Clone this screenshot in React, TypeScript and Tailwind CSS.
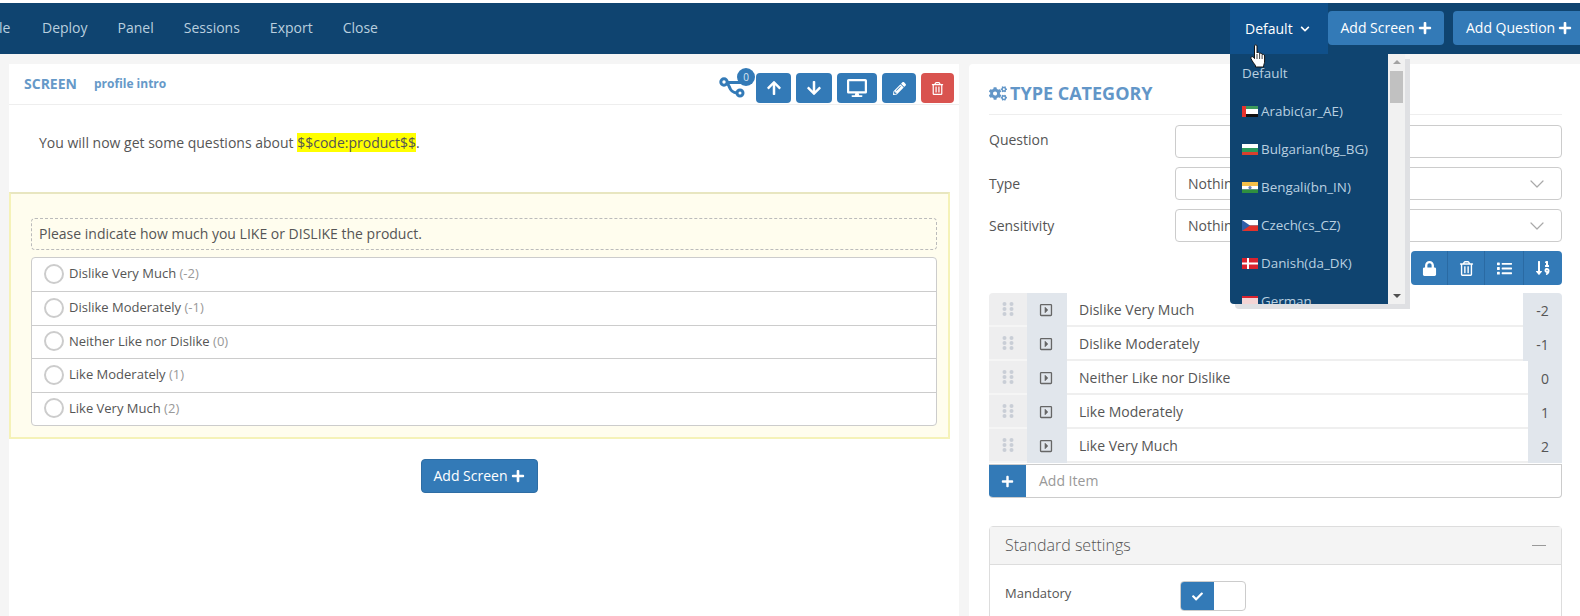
import {
  FaArrowDown,
  FaArrowUp,
  FaCheck,
  FaChevronDown,
  FaCogs,
  FaDesktop,
  FaList,
  FaLock,
  FaPencilAlt,
  FaPlus,
  FaRegCaretSquareRight,
  FaRegTrashAlt,
  FaSortNumericDown,
} from 'react-icons/fa';
import { ChevronDown } from 'lucide-react';

const NAV = ['Deploy', 'Panel', 'Sessions', 'Export', 'Close'];
const ITEMS = [
  { label: 'Dislike Very Much', score: '-2', wide: true },
  { label: 'Dislike Moderately', score: '-1', wide: true },
  { label: 'Neither Like nor Dislike', score: '0', wide: false },
  { label: 'Like Moderately', score: '1', wide: false },
  { label: 'Like Very Much', score: '2', wide: false },
];

function Flag({ code }: { code: string }) {
  return (
    <svg width="16" height="11" viewBox="0 0 16 11" className="mr-[3px] shrink-0">
      {code === 'ae' && (
        <>
          <rect width="16" height="3" fill="#3d9a5c" />
          <rect y="3" width="16" height="5" fill="#fff" />
          <rect y="8" width="16" height="3" fill="#111" />
          <rect width="4" height="11" fill="#e8332d" />
        </>
      )}
      {code === 'bg' && (
        <>
          <rect width="16" height="4" fill="#fff" />
          <rect y="4" width="16" height="4" fill="#2b9a5a" />
          <rect y="8" width="16" height="3" fill="#d9402e" />
        </>
      )}
      {code === 'in' && (
        <>
          <rect width="16" height="4" fill="#f3c04a" />
          <rect y="4" width="16" height="3.5" fill="#fff" />
          <rect y="7.5" width="16" height="3.5" fill="#2f8f3e" />
          <circle cx="8" cy="5.6" r="1.6" fill="#6a7fb5" />
        </>
      )}
      {code === 'cz' && (
        <>
          <rect width="16" height="5.5" fill="#fff" />
          <rect y="5.5" width="16" height="5.5" fill="#e2332b" />
          <polygon points="0,0 8,5.5 0,11" fill="#2f5fa8" />
        </>
      )}
      {code === 'dk' && (
        <>
          <rect width="16" height="11" fill="#d9232e" />
          <rect x="5" width="2" height="11" fill="#fff" />
          <rect y="4.5" width="16" height="2" fill="#fff" />
        </>
      )}
      {code === 'de' && (
        <>
          <rect width="16" height="2" fill="#d9232e" />
          <rect y="2" width="16" height="9" fill="#f4d5d5" />
        </>
      )}
    </svg>
  );
}

function LangMenu() {
  const langs = [
    { code: 'ae', label: 'Arabic(ar_AE)' },
    { code: 'bg', label: 'Bulgarian(bg_BG)' },
    { code: 'in', label: 'Bengali(bn_IN)' },
    { code: 'cz', label: 'Czech(cs_CZ)' },
    { code: 'dk', label: 'Danish(da_DK)' },
    { code: 'de', label: 'German' },
  ];
  return (
    <div className="absolute left-0 top-[51px] z-20 flex h-[250px] w-[175px] rounded-bl shadow-[5px_5px_0_#dfe0e3]">
      <div className="h-full w-[158px] overflow-hidden rounded-bl bg-[#0f4470] pl-3 text-[13.4px] text-[#b9d0e0]">
        <div className="flex h-[38px] items-center">Default</div>
        {langs.map((l) => (
          <div key={l.code} className="flex h-[38px] items-center pt-[1px]">
            <Flag code={l.code} />
            {l.label}
          </div>
        ))}
      </div>
      <div className="relative h-full w-[17px] bg-[#f1f1f1]">
        <div className="absolute left-[2px] top-[17px] h-[32px] w-[13px] bg-[#c1c1c1]" />
        <div className="absolute left-[5px] top-[6px] h-0 w-0 border-x-[4px] border-b-[4px] border-x-transparent border-b-[#a3a3a3]" />
        <div className="absolute bottom-[6px] left-[5px] h-0 w-0 border-x-[4px] border-t-[4px] border-x-transparent border-t-[#505050]" />
      </div>
    </div>
  );
}

function HandCursor() {
  return (
    <svg width="17" height="24" viewBox="0 0 17 24" className="absolute left-[20px] top-[41px] z-30">
      <path
        d="M4.5 2 C4.5 0.4 7 0.4 7 2 V9 C7.5 8 9.5 8 9.6 9.6 C10.2 8.8 12 9 12.1 10.6 C12.8 10 14.6 10.3 14.6 12 V17 C14.6 19 14 20 13.6 21.5 V23 H5.5 V21.5 C4 19.5 2 17 1 14.5 C0.6 13 2.2 12 3.4 13.2 L4.5 14.6 Z"
        fill="#fff"
        stroke="#111"
        strokeWidth="1"
        strokeLinejoin="round"
      />
      <path d="M7 10 V15 M9.6 10 V15 M12.1 11 V15" stroke="#111" strokeWidth="0.8" />
    </svg>
  );
}

function TopBar() {
  return (
    <header className="mt-[3px] flex h-[51px] items-stretch justify-between overflow-hidden bg-[#0f4470]">
      <nav className="flex items-center gap-[30px] pb-[1px] text-sm text-[#b9cfdf]">
        <span className="-ml-[1px] w-[13px] overflow-hidden">le</span>
        {NAV.map((n) => (
          <span key={n}>{n}</span>
        ))}
      </nav>
      <div className="flex w-[350px] items-stretch">
        <div className="flex w-[98px] shrink-0 items-center gap-[7px] bg-[#10508a] pl-[15px] text-sm text-white">
          Default <FaChevronDown className="mt-[1px] h-[10px] w-[10px]" />
        </div>
        <div className="flex items-start pt-[8px]">
          <button className="flex h-[34px] w-[116px] shrink-0 items-center justify-center gap-[3px] rounded bg-[#337ab7] text-sm text-white">
            Add Screen <FaPlus className="h-[14px] w-[14px]" />
          </button>
          <button className="ml-[9px] flex h-[34px] w-[130px] shrink-0 items-center gap-[3px] rounded bg-[#337ab7] pl-[13px] text-sm text-white">
            Add Question <FaPlus className="h-[14px] w-[14px]" />
          </button>
        </div>
      </div>
    </header>
  );
}

function BranchIcon() {
  return (
    <svg width="30" height="30" viewBox="0 0 30 30" className="text-[#337ab7]">
      <g fill="none" stroke="currentColor" strokeWidth="3">
        <circle cx="6" cy="11" r="3.2" />
        <circle cx="22" cy="22" r="3" />
        <path d="M9 11.5 H24 M9.5 13 C12.5 15 10.5 21 19 22" />
      </g>
    </svg>
  );
}

function ScreenPanel() {
  const btn = 'flex h-[30px] items-center justify-center rounded bg-[#337ab7] text-white';
  return (
    <section className="ml-[9px] w-[950px] bg-white">
      <div className="flex h-[41px] items-center border-b border-[#eeeeee] pl-[15px] pr-[5px]">
        <b className="text-sm text-[#6699c8]">SCREEN</b>
        <b className="ml-[17px] text-xs text-[#6699c8]">profile intro</b>
        <div className="relative ml-auto mr-[8px] mt-[4px]">
          <BranchIcon />
          <span className="absolute -right-[7px] -top-[3px] flex h-[18px] w-[18px] items-center justify-center rounded-full bg-[#337ab7] text-[10px] text-[#dbe8f3]">
            0
          </span>
        </div>
        <div className="mt-[8px] flex gap-[5px]">
          <button className={`${btn} w-[35px]`}>
            <FaArrowUp className="h-[16px] w-[16px]" />
          </button>
          <button className={`${btn} w-[36px]`}>
            <FaArrowDown className="h-[16px] w-[16px]" />
          </button>
          <button className={`${btn} w-[40px]`}>
            <FaDesktop className="h-[20px] w-[20px]" />
          </button>
          <button className={`${btn} w-[34px]`}>
            <FaPencilAlt className="h-[13px] w-[13px]" />
          </button>
          <button className="flex h-[30px] w-[33px] items-center justify-center rounded bg-[#d9534f] text-white">
            <FaRegTrashAlt className="h-[13px] w-[13px]" />
          </button>
        </div>
      </div>

      <p className="h-[87px] pl-[30px] pt-[28px] text-sm leading-5 text-[#555]">
        You will now get some questions about <span className="bg-[#ffff00]">$$code:product$$</span>.
      </p>

      <div className="mr-[9px] border-2 border-[#f5f2b8] border-t-[#e8e6c0] bg-[#fffdee] pb-[11px] pl-[20px] pr-[11px] pt-[24px]">
        <div className="flex h-[32px] items-center rounded border border-dashed border-[#bbb] pl-[7px] text-sm text-[#555]">
          Please indicate how much you LIKE or DISLIKE the product.
        </div>
        <div className="mt-[7px] overflow-hidden rounded border border-[#ccc] bg-white">
          {ITEMS.map((it, i) => (
            <div
              key={it.label}
              className={`flex h-[33.4px] items-center pb-[1px] pl-[12px] text-[13px] text-[#555] ${i > 0 ? 'border-t border-[#ccc]' : ''}`}
            >
              <span className="mr-[5px] h-[20px] w-[20px] rounded-full border-2 border-[#ccc] bg-white" />
              {it.label}&nbsp;<span className="text-[#999]">({it.score})</span>
            </div>
          ))}
        </div>
      </div>

      <div className="mt-[20px] flex justify-center pr-[10px]">
        <button className="flex h-[34px] w-[117px] items-center justify-center gap-[3px] rounded border border-[#2e6da4] bg-[#337ab7] text-sm text-white">
          Add Screen <FaPlus className="h-[14px] w-[14px]" />
        </button>
      </div>
    </section>
  );
}

function Field({ label, value, select, lift }: { label: string; value?: string; select?: boolean; lift?: boolean }) {
  return (
    <div className="flex h-[33px] items-center">
      <span className={`w-[186px] text-sm text-[#555] ${lift ? 'pb-[4px]' : ''}`}>{label}</span>
      <div className="flex h-[33px] flex-1 items-center justify-between rounded border border-[#ccc] bg-white pl-[12px] pr-[12px] text-sm text-[#555]">
        {value}
        {select && <ChevronDown className="h-6 w-6 text-[#a9a9a9]" strokeWidth={1.2} />}
      </div>
    </div>
  );
}

function DragDots() {
  return (
    <svg width="12" height="14" viewBox="0 0 12 14" fill="#c9ced6">
      {[2, 7, 12].map((y) => (
        <g key={y}>
          <circle cx="2.5" cy={y} r="2" />
          <circle cx="9.5" cy={y} r="2" />
        </g>
      ))}
    </svg>
  );
}

function ItemRow({ label, score, wide }: { label: string; score: string; wide: boolean }) {
  return (
    <div className="flex h-[34px] items-stretch">
      <div className="flex w-[38px] items-center justify-center border-b-2 border-[#f5f5f5] bg-[#eeeeef]">
        <DragDots />
      </div>
      <div className="flex w-[40px] items-center justify-center bg-[#e1e6ec] pr-[2px] text-[#666]">
        <FaRegCaretSquareRight className="h-[14px] w-[14px]" />
      </div>
      <div className="flex flex-1 items-center border-b-2 border-[#efefef] bg-white pl-[12px] pt-[1px] text-sm text-[#555]">
        {label}
      </div>
      <div
        className={`flex items-center justify-center bg-[#e1e6ec] pt-[1px] text-sm text-[#555] ${wide ? 'w-[39px]' : 'w-[34px]'}`}
      >
        {score}
      </div>
    </div>
  );
}

function TypePanel() {
  const seg = 'flex h-full items-center justify-center';
  return (
    <section className="ml-[10px] flex-1 rounded-tl bg-white pl-[20px] pr-[18px]">
      <h2 className="flex h-[51px] items-center gap-[3px] border-b border-[#eeeeee] pt-[9px] text-[18px] font-bold text-[#6296c8]">
        <FaCogs className="h-[15px] w-[18px]" /> TYPE CATEGORY
      </h2>
      <div className="mt-[10px] flex flex-col gap-[9px]">
        <Field label="Question" lift />
        <Field label="Type" value="Nothing" select />
        <Field label="Sensitivity" value="Nothing" select />
      </div>

      <div className="mt-[9px] flex justify-end">
        <div className="flex h-[34px] w-[151px] divide-x divide-[#2a6aa3] rounded bg-[#337ab7] text-white">
          <div className={`${seg} w-[37px]`}>
            <FaLock className="h-[15px] w-[15px]" />
          </div>
          <div className={`${seg} w-[37px]`}>
            <FaRegTrashAlt className="h-[15px] w-[15px]" />
          </div>
          <div className={`${seg} w-[39px]`}>
            <FaList className="h-[15px] w-[15px]" />
          </div>
          <div className={`${seg} w-[38px]`}>
            <FaSortNumericDown className="h-[16px] w-[16px]" />
          </div>
        </div>
      </div>

      <div className="mt-[8px] overflow-hidden rounded-t">
        {ITEMS.map((it) => (
          <ItemRow key={it.label} label={it.label} score={it.score} wide={it.wide} />
        ))}
      </div>
      <div className="mt-[1px] flex h-[34px] overflow-hidden rounded-b border-b border-r border-t border-[#ccc]">
        <div className="-my-[1px] flex w-[37px] items-center justify-center bg-[#337ab7] text-white">
          <FaPlus className="h-[13px] w-[13px]" />
        </div>
        <div className="flex flex-1 items-center pl-[13px] text-sm text-[#999]">Add Item</div>
      </div>

      <div className="mt-[28px] rounded-t border border-[#ddd]">
        <div className="flex h-[38px] items-center justify-between border-b border-[#ddd] bg-[#f4f4f4] pb-[1px] pl-[15px] pr-[15px] text-base font-light text-[#555]">
          Standard settings
          <span className="h-px w-[14px] bg-[#999]" />
        </div>
        <div className="flex h-[60px] items-start pl-[15px] pt-[16px]">
          <span className="flex h-[26px] w-[175px] items-center text-[13px] text-[#555]">Mandatory</span>
          <div className="flex h-[30px] w-[66px] overflow-hidden rounded border border-[#ccc]">
            <div className="flex w-[33px] items-center justify-center bg-[#337ab7] text-white">
              <FaCheck className="h-[11px] w-[11px]" />
            </div>
          </div>
        </div>
      </div>
    </section>
  );
}

export default function App() {
  return (
    <div className="relative h-[616px] w-[1580px] overflow-hidden bg-white font-['Open_Sans',sans-serif]">
      <TopBar />
      <main className="flex h-[562px] overflow-hidden bg-[#f5f5f5] pt-[10px]">
        <ScreenPanel />
        <TypePanel />
      </main>
      <div className="absolute left-[1230px] top-[3px]">
        <LangMenu />
        <HandCursor />
      </div>
    </div>
  );
}
